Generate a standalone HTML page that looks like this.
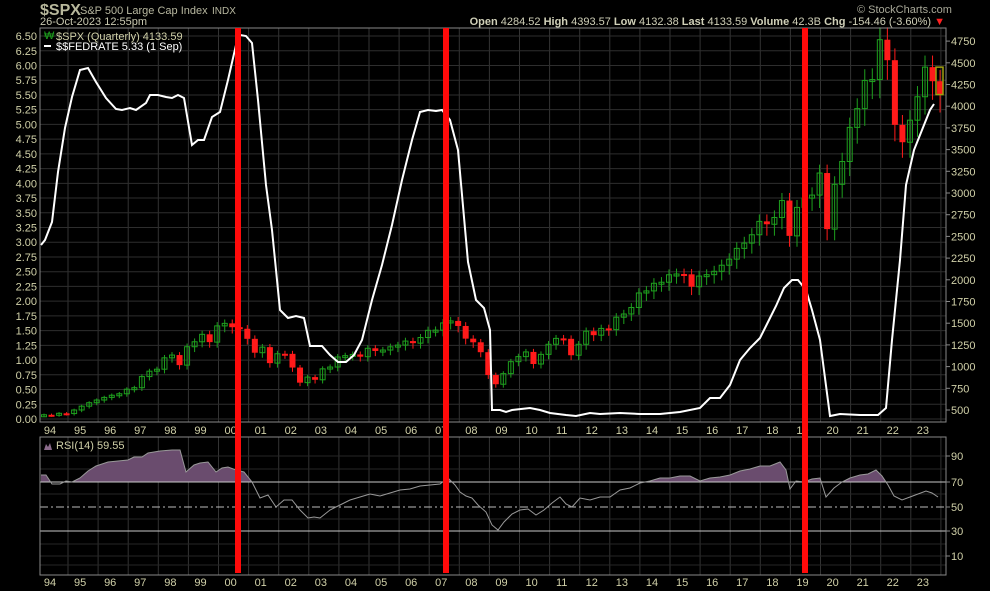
<!DOCTYPE html>
<html><head><meta charset="utf-8"><style>
html,body{margin:0;padding:0;background:#000;width:990px;height:591px;overflow:hidden}
svg{display:block;font-family:"Liberation Sans",sans-serif}
</style></head><body>
<svg id="s" width="990" height="591" xmlns="http://www.w3.org/2000/svg">
<text x="40" y="15" font-size="16" font-weight="bold" fill="#b8b89c">$SPX</text>
<text x="80" y="14" font-size="11" fill="#b8b8a0">S&amp;P 500 Large Cap Index</text>
<text x="212" y="14" font-size="10" fill="#b8b8a0">INDX</text>
<text x="40" y="25" font-size="11" fill="#c8c8b0">26-Oct-2023 12:55pm</text>
<text x="857" y="13" font-size="11" fill="#a8a898">© StockCharts.com</text>
<text x="945" y="25" font-size="11" fill="#d0d0b8" text-anchor="end"><tspan font-weight="bold">Open</tspan> 4284.52  <tspan font-weight="bold">High</tspan> 4393.57  <tspan font-weight="bold">Low</tspan> 4132.38  <tspan font-weight="bold">Last</tspan> 4133.59  <tspan font-weight="bold">Volume</tspan> 42.3B  <tspan font-weight="bold">Chg</tspan> -154.46 (-3.60%) <tspan fill="#ff2020">▼</tspan></text>
<g id="g"></g>
</svg>
<script>
var NS="http://www.w3.org/2000/svg",g=document.getElementById("g");
function el(t,a,txt){var e=document.createElementNS(NS,t);for(var k in a)e.setAttribute(k,a[k]);if(txt!=null)e.textContent=txt;g.appendChild(e);return e;}
var L=40,R=946,T=28,B=422,T2=437,B2=575;
for(var i=0;i<30;i++){var x=68+i*30.1;if(x<R){el("line",{x1:x,y1:T,x2:x,y2:B,stroke:"#333",});el("line",{x1:x,y1:T2,x2:x,y2:B2,stroke:"#333"});}}
for(var v=0;v<=26;v++){var y=419-v*14.73;el("line",{x1:L,y1:y,x2:R,y2:y,stroke:"#2e2e2e"});el("text",{x:37,y:y+4,"font-size":11,fill:"#d0d0a8","text-anchor":"end"},(v*0.25).toFixed(2));}
for(var p=500;p<=4750;p+=250){var y=410-(p-500)*0.0868;el("line",{x1:R,y1:y,x2:R+4,y2:y,stroke:"#888"});el("text",{x:951,y:y+4,"font-size":11,fill:"#d0d0a8"},p);}
[456,469,494,519,544,556,565].forEach(function(y){el("line",{x1:L,y1:y,x2:R,y2:y,stroke:"#262626"});});
[[90,456],[70,482],[50,507],[30,531],[10,556]].forEach(function(a){el("line",{x1:R,y1:a[1],x2:R+4,y2:a[1],stroke:"#888"});el("text",{x:951,y:a[1]+4,"font-size":11,fill:"#d0d0a8"},a[0]);});
for(var i=0;i<30;i++){var yr=(94+i)%100;var s=(yr<10?"0":"")+yr;var x=50+i*30.1;el("text",{x:x,y:434,"font-size":11,fill:"#d0d0a8","text-anchor":"middle"},s);el("text",{x:x,y:586,"font-size":11,fill:"#d0d0a8","text-anchor":"middle"},s);}
var c=[445,444,462,459,500,544,584,615,645,670,687,740,757,885,947,970,1101,1133,1017,1229,1286,1372,1282,1469,1498,1454,1436,1320,1160,1224,1040,1148,1147,989,815,879,848,974,995,1111,1126,1140,1114,1211,1180,1191,1228,1248,1294,1270,1335,1418,1420,1503,1526,1468,1322,1280,1166,903,797,919,1057,1115,1169,1030,1141,1257,1325,1320,1131,1257,1408,1362,1440,1426,1569,1606,1681,1848,1872,1960,1972,2058,2067,2063,1920,2043,2059,2098,2168,2238,2362,2423,2519,2673,2640,2718,2913,2506,2834,2941,2976,3230,2584,3100,3363,3756,3972,4297,4307,4766,4530,3785,3585,3839,4109,4450,4288,4134];
function py(p){return 410-(p-500)*0.0868;}
var prev=440;
for(var i=0;i<c.length;i++){var x=44+i*7.53,o=prev,cl=c[i];var hi=Math.max(o,cl)*1.03,lo=Math.min(o,cl)*0.95;
var col=cl<o?"#ff1a1a":"#1ea01e";
el("line",{x1:x,y1:py(hi),x2:x,y2:py(lo),stroke:col,"stroke-width":1});
var y1=py(Math.max(o,cl)),y2=py(Math.min(o,cl));if(y2-y1<2)y2=y1+2;
if(cl<o)el("rect",{x:x-3,y:y1,width:6,height:y2-y1,fill:col});
else el("rect",{x:x-2.5,y:y1,width:5,height:y2-y1,fill:"none",stroke:col,"stroke-width":1});
prev=cl;}
el("rect",{x:936,y:py(4450),width:7,height:py(4134)-py(4450),fill:"none",stroke:"#a0a010","stroke-width":1.5});
var f=[41,245,45,240,52,222,58,172,65,128,72,97,80,70,88,68,96,82,106,98,116,109,122,110,130,108,136,110,146,103,150,95,158,95,166,97,172,98,178,95,184,98,192,145,198,140,204,140,212,117,220,112,228,80,236,45,240,35,246,36,252,43,258,100,266,185,272,230,280,310,288,318,296,316,304,318,310,346,322,346,330,355,338,362,346,362,354,355,362,340,372,300,382,265,392,225,402,180,412,140,420,112,428,110,436,111,442,110,450,120,458,150,468,262,476,300,484,308,490,330,492,410,500,410,506,412,512,410,530,408,540,410,550,413,566,415,576,416,590,413,600,414,620,413,640,414,660,414,680,412,700,408,710,398,720,398,730,385,740,360,750,348,760,338,768,322,776,306,784,288,792,280,798,280,806,290,812,310,820,340,830,416,840,414,860,415,878,415,886,408,892,340,900,260,906,185,914,150,922,130,930,110,934,104];
el("polyline",{points:f.join(" "),fill:"none",stroke:"#fff","stroke-width":2});
var r=[41,475,46,475,52,484,60,484,66,481,72,482,80,478,88,471,96,466,108,462,118,461,128,460,134,457,142,457,148,453,160,451,172,450,180,450,186,472,194,465,200,463,208,462,216,472,222,468,228,467,236,470,244,472,252,482,260,498,268,495,276,507,284,500,292,500,300,510,308,518,314,517,320,518,330,510,340,505,350,500,360,497,370,494,380,496,390,493,400,490,410,489,420,486,430,485,440,484,448,478,455,485,460,492,466,496,472,498,478,505,486,512,492,525,498,530,504,522,512,514,520,510,528,509,536,515,544,510,552,503,560,497,566,504,572,507,580,498,590,500,600,497,610,497,620,490,630,488,640,483,650,481,660,478,670,478,680,476,690,476,700,481,710,478,720,477,730,475,740,471,750,469,760,466,770,466,780,462,786,470,790,489,796,481,804,482,812,479,820,478,826,497,834,488,842,482,850,478,860,475,868,474,876,470,882,476,888,485,894,496,902,500,910,497,918,494,926,491,932,493,938,497];
var d=document.createElementNS(NS,"clipPath");d.setAttribute("id","cp");var cr=document.createElementNS(NS,"rect");cr.setAttribute("x",L);cr.setAttribute("y",T2);cr.setAttribute("width",R-L);cr.setAttribute("height",482-T2);d.appendChild(cr);g.appendChild(d);
el("polygon",{points:"41,482 "+r.join(" ")+" 938,482",fill:"#6a4c6e","clip-path":"url(#cp)"});
el("line",{x1:L,y1:482,x2:R,y2:482,stroke:"#c8c8c8"});
el("line",{x1:L,y1:507,x2:R,y2:507,stroke:"#bbb","stroke-dasharray":"8 3 2 3"});
el("line",{x1:L,y1:531,x2:R,y2:531,stroke:"#c8c8c8"});
el("polyline",{points:r.join(" "),fill:"none",stroke:"#999","stroke-width":1});
el("rect",{x:L,y:T,width:R-L,height:B-T,fill:"none",stroke:"#888"});
el("rect",{x:L,y:T2,width:R-L,height:B2-T2,fill:"none",stroke:"#888"});
el("text",{x:44,y:39,"font-size":11,fill:"#1ea01e"},"₩");
el("text",{x:56,y:40,"font-size":11,fill:"#d0d0a8"},"$SPX (Quarterly) 4133.59");
el("rect",{x:44,y:45,width:7,height:2,fill:"#fff"});
el("text",{x:56,y:50,"font-size":11,fill:"#fff"},"$$FEDRATE 5.33 (1 Sep)");
el("polygon",{points:"44,450 46,444 48,447 50,443 52,450",fill:"#8a6a8a"});
el("text",{x:56,y:449,"font-size":11,fill:"#d0d0a8"},"RSI(14) 59.55");
[238,446,805].forEach(function(x){el("rect",{x:x-3,y:T,width:6,height:545,fill:"#ff0a0a"});});
</script>
</body></html>
